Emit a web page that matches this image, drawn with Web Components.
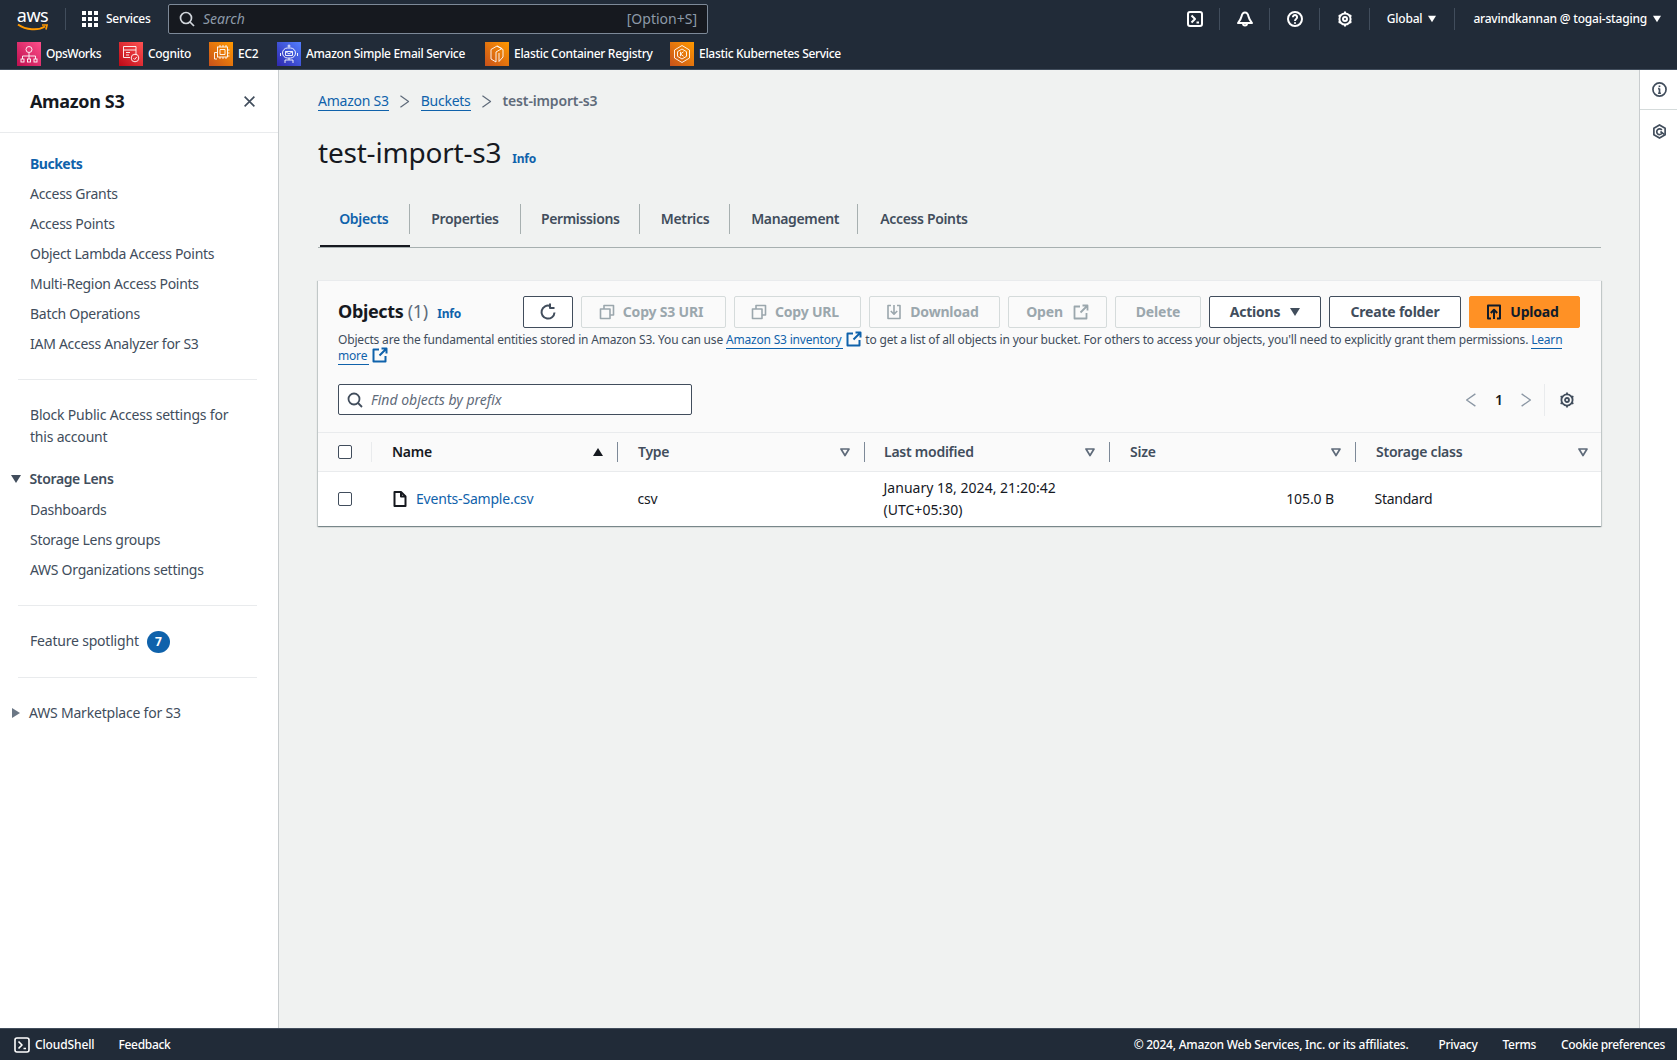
<!DOCTYPE html>
<html lang="en"><head><meta charset="utf-8"><title>test-import-s3</title>
<style>
html,body{margin:0;height:100%;background:#f0f2f1;}
body{font-family:"Noto Sans","Open Sans",sans-serif;font-size:14px;line-height:20px;color:#16191f;overflow:hidden;letter-spacing:-.25px}
aws-page{height:1060px}
</style></head><body>
<aws-page>
  <aws-topbar slot="top"></aws-topbar>
  <aws-sidenav slot="nav"></aws-sidenav>
  <aws-main slot="main"></aws-main>
  <aws-rail slot="rail"></aws-rail>
  <aws-footer slot="foot"></aws-footer>
</aws-page>
<script>
const P = {
 terminal:'<rect x="1" y="1" width="14" height="14" rx="2"/><path d="M4.500 4.500 8 8l-3.500 3.500M9.500 11.500H12"/>',
 bell:'<path d="M8 1.500C6 1.500 5 3 4.500 5.500 4 8 2.500 10 1 12h14c-1.500-2-3-4-3.500-6.500C11 3 10 1.500 8 1.500Z"/><path d="M6 12.500a2 2 0 0 0 4 0"/>',
 help:'<circle cx="8" cy="8" r="7"/><path d="M5.900 6.200a2.100 2.100 0 1 1 3.400 1.600C8.500 8.400 8 8.800 8 10M8 11.300v1.400"/>',
 gear:'<circle cx="8" cy="8" r="5.600"/><circle cx="8" cy="8" r="2"/><path d="M8 .6v2.200M8 13.200v2.200M1.600 4.300l1.900 1.100M12.500 10.600l1.900 1.100M1.600 11.700l1.900-1.100M12.500 5.400l1.900-1.100"/>',
 info:'<circle cx="8" cy="8" r="7"/><path d="M8 7v5M6.500 12h3M6.500 7H8M8 3.600v1.600"/>',
 hex:'<path d="M8 1 14 4.500v7L8 15 2 11.500v-7Z"/><path d="M10.500 6.500A3 3 0 1 0 10.500 10M9 8l4 3"/>',
 close:'<path d="M2 2l12 12M14 2 2 14"/>',
 search:'<circle cx="7" cy="7" r="5.500"/><path d="m11 11 4 4"/>',
 refresh:'<path d="M14.500 8.500A6.500 6.500 0 1 1 10.300 2"/><path d="M10 -.5V4H14.500"/>',
 copy:'<path d="M5 5V1.500h9.500V11H11"/><rect x="1.500" y="5" width="9.500" height="9.500"/>',
 download:'<path d="M5 1.500H2v13h12v-13h-3"/><path d="M8 1v9M4.800 7 8 10.200 11.200 7"/>',
 external:'<path d="M13.500 9v5.500h-12v-12H7"/><path d="M9.500 1.500h5v5M14.500 1.500 7.500 8.500"/>',
 upload:'<path d="M5 14.500H2v-13h12v13h-3"/><path d="M8 15V6M4.800 9 8 5.800 11.200 9"/>',
 file:'<path d="M2.500 1h6.500l4.500 4.500V15h-11Z"/><path d="M9 1v4.500h4.500"/>',
 prev:'<path d="M13 1 3 8l10 7"/>',
 next:'<path d="M3 1l10 7-10 7"/>'
};
function def(tag, css, html){
  customElements.define(tag, class extends HTMLElement{
    connectedCallback(){
      if(this.shadowRoot) return;
      this.attachShadow({mode:'open'}).innerHTML = `<style>${css}</style>${typeof html==='function'?html(this):html}`;
    }
  });
}
def('aws-icon', ':host{display:inline-flex;flex:none;line-height:0}svg{display:block;overflow:visible;fill:none;stroke:currentColor;stroke-linejoin:round}',
 el=>{const s=el.getAttribute('size')||16;const w=el.getAttribute('sw')||2;
  return `<svg width="${s}" height="${s}" viewBox="0 0 16 16" stroke-width="${w}">${P[el.getAttribute('name')]}</svg>`;});
def('aws-caret', ':host{display:inline-flex;flex:none;line-height:0}svg{display:block}',
 el=>{const w=el.getAttribute('w')||10,d=el.getAttribute('dir')||'down',c=el.getAttribute('color')||'currentColor';
  const pts={down:'0,1 10,1 5,9',up:'0,9 10,9 5,1',right:'1,0 9,5 1,10',outline:'1,2 9,2 5,8.5'}[d];
  const st=d==='outline'?`fill="none" stroke="${c}" stroke-width="1.700" stroke-linejoin="round"`:`fill="${c}"`;
  return `<svg width="${w}" height="${w}" viewBox="0 0 10 10"><polygon points="${pts}" ${st}/></svg>`;});

const SVC={
 ops:['#bd0f4f','#ff4f8b','<circle cx="12" cy="7.500" r="3"/><path d="M12 10.500V14M5.500 17v-3h13v3M12 14v3"/><rect x="4" y="17" width="3" height="3"/><rect x="10.500" y="17" width="3" height="3"/><rect x="17" y="17" width="3" height="3"/>'],
 cog:['#bd0816','#ff5252','<path d="M17 13V4.500H4.500v11H11"/><path d="M4.500 8h12.500M7 10.500h4M7 13h3"/><circle cx="16" cy="16" r="3.800"/><path d="m14.500 16.200 1.200 1.200 2-2.400"/>'],
 ec2:['#c8511b','#ff9900','<rect x="8.500" y="5" width="10" height="10"/><path d="M8 17H5.500v-6.500H8M11 7.500h5v5h-5z"/><path d="M11 3v2M14 3v2M17 3v2M20.500 8h-2M20.500 11h-2M20.500 14h-2M11 15v2M14 15v2M17 15v2"/>'],
 ses:['#2e27ad','#527fff','<rect x="5.500" y="6" width="13" height="10" rx="5"/><path d="M8.500 9.500l3.500 2.500 3.500-2.500M8.500 9.500h7v4h-7z"/><circle cx="12" cy="4" r="1"/><path d="M12 16v2M8 21v-3h8v3M3.500 11v3M20.500 11v3"/>'],
 ecr:['#c8511b','#ff9900','<path d="M12 4 6 7.500V17l5 3V10l6-3.500Z"/><path d="m12 4 6 3.500V15l-4 4.500V11"/>'],
 eks:['#c8511b','#ff9900','<path d="M12 3.500 19.500 8v8L12 20.500 4.500 16V8Z"/><path d="M12 7l4.500 2.700v4.600L12 17l-4.500-2.700V9.700Z"/><path d="M10.500 9.800v4.400M13.500 9.800 10.500 12l3 2.200"/>']
};
def('aws-fav', ':host{display:inline-flex;align-items:center;gap:5px;font-size:12px;font-weight:500;color:#fff;letter-spacing:-.3px} svg{display:block;flex:none}',
 el=>{const [a,b,c]=SVC[el.getAttribute('icon')];return `<svg width="24" height="24" viewBox="0 0 24 24"><defs><linearGradient id="g" x1="0" y1="1" x2="1" y2="0"><stop offset="0" stop-color="${a}"/><stop offset="1" stop-color="${b}"/></linearGradient></defs><rect width="24" height="24" fill="url(#g)"/><g fill="none" stroke="#fff" stroke-width=".9">${c}</g></svg><slot></slot>`;});

def('aws-page', `:host{display:grid;grid-template-columns:279px 1fr 38px;grid-template-rows:70px 958px 32px;grid-template-areas:"t t t" "n m r" "f f f";width:1677px}
 ::slotted([slot=top]){grid-area:t} ::slotted([slot=nav]){grid-area:n} ::slotted([slot=main]){grid-area:m} ::slotted([slot=rail]){grid-area:r} ::slotted([slot=foot]){grid-area:f}`,
 '<slot name="top"></slot><slot name="nav"></slot><slot name="main"></slot><slot name="rail"></slot><slot name="foot"></slot>');

def('aws-topbar', `:host{display:block;background:#212b38;border-bottom:1px solid #414d5c;color:#fff;box-sizing:border-box;height:70px;font-size:12px;letter-spacing:-.28px}
 .r1{display:flex;align-items:center;height:38px;padding:0 16px 0 16px}
 .r2{display:flex;align-items:center;height:24px;margin-top:4px;padding-left:17px}
 .logo{width:33px;height:28px;display:flex;flex-direction:column;align-items:center;margin-right:16px;flex:none}
 .logo b{font:400 18px/16px "Noto Sans",sans-serif;letter-spacing:-.5px;margin-top:2px}
 .logo svg{display:block;margin-top:0}
 .sep{width:1px;height:22px;background:#414d5c;flex:none}
 .grid{margin-left:16px;margin-right:8px;display:grid;grid-template-columns:repeat(3,4px);gap:2px;flex:none}
 .grid i{width:4px;height:4px;background:#fff;display:block}
 .svc{font-weight:500;width:62px;flex:none}
 .search{width:540px;height:30px;box-sizing:border-box;background:#16191f;border:1px solid #7d8998;border-radius:2px;display:flex;align-items:center;padding:0 10px;color:#d1d5db;font-size:14px;flex:none;letter-spacing:0}
 .search em{margin-left:8px;color:#8d99a8;flex:1}
 .search span{color:#8d99a8}
 .right{margin-left:auto;display:flex;align-items:center;height:22px;letter-spacing:-.2px}
 .ic{width:16px;display:flex}
 .right .sep{margin:0 17px 0 16px}
 .right .wide{margin:0 18px 0 18px}
 .right b{font-weight:500;display:inline-flex;align-items:center;gap:6px}`,
 `<div class="r1"><div class="logo"><b>aws</b><svg width="33" height="9" viewBox="0 0 33 9"><path d="M2 1.500C10 7 22 8 29 3.500" fill="none" stroke="#f90" stroke-width="2"/><path d="M26 2h5l-1 4.500" fill="none" stroke="#f90" stroke-width="1.700"/></svg></div>
  <span class="sep"></span><span class="grid">${'<i></i>'.repeat(9)}</span><span class="svc">Services</span>
  <div class="search"><aws-icon name="search" sw="1.700"></aws-icon><em>Search</em><span>[Option+S]</span></div>
  <div class="right"><span class="ic"><aws-icon name="terminal"></aws-icon></span><span class="sep"></span><span class="ic"><aws-icon name="bell"></aws-icon></span><span class="sep"></span><span class="ic"><aws-icon name="help"></aws-icon></span><span class="sep"></span><span class="ic"><aws-icon name="gear"></aws-icon></span><span class="sep"></span><b>Global <aws-caret w="8"></aws-caret></b><span class="sep wide"></span><b>aravindkannan @ togai-staging <aws-caret w="8"></aws-caret></b></div></div>
 <div class="r2">
  <aws-fav icon="ops" style="width:102px;letter-spacing:-.45px">OpsWorks</aws-fav>
  <aws-fav icon="cog" style="width:90px">Cognito</aws-fav>
  <aws-fav icon="ec2" style="width:68px">EC2</aws-fav>
  <aws-fav icon="ses" style="width:208px">Amazon Simple Email Service</aws-fav>
  <aws-fav icon="ecr" style="width:185px">Elastic Container Registry</aws-fav>
  <aws-fav icon="eks">Elastic Kubernetes Service</aws-fav>
 </div>`);

def('aws-sidenav', `:host{display:block;background:#fff;border-right:1px solid #c9cdcf;box-sizing:border-box;height:958px;color:#414d5c;letter-spacing:-.28px}
 header{border-bottom:1px solid #e9ebed;box-sizing:border-box;height:63px;display:flex;align-items:center;justify-content:space-between;padding:0 22px 0 30px}
 h2{margin:0;font-size:18px;font-weight:700;line-height:24px;color:#16191f;letter-spacing:-.35px}
 ul{list-style:none;margin:0;padding:0}
 li{height:30px;line-height:30px;padding-left:30px;white-space:nowrap}
 .first{padding-top:16px;padding-bottom:20px}
 hr{border:0;border-top:1px solid #e9ebed;margin:0 21px 0 18px}
 .block{padding:24px 30px 16px;line-height:22px;letter-spacing:-.2px}
 .group{height:31px;box-sizing:border-box;padding-bottom:2px;display:flex;align-items:center;font-weight:600;padding-left:11px;gap:8.500px;letter-spacing:-.36px}
 .spot{height:30px;display:flex;align-items:center;padding-left:30px;gap:8px;margin:20px 0 21px;letter-spacing:-.2px}
 .badge{width:23px;height:22px;border-radius:50%;background:#0f62ab;color:#fff;font-size:12px;font-weight:700;display:flex;align-items:center;justify-content:center;margin-top:1px}
 .mk{height:30px;display:flex;align-items:center;padding-left:11px;gap:8px;margin-top:20px;letter-spacing:-.2px}
 .act{color:#0f62ab;font-weight:700;letter-spacing:-.5px}
 .pad{padding-bottom:20px}`,
 `<header><h2>Amazon S3</h2><aws-icon name="close" size="13" sw="2"></aws-icon></header>
  <ul class="first"><li class="act">Buckets</li><li>Access Grants</li><li>Access Points</li><li>Object Lambda Access Points</li><li>Multi-Region Access Points</li><li>Batch Operations</li><li>IAM Access Analyzer for S3</li></ul>
  <hr><div class="block">Block Public Access settings for this account</div>
  <div class="group"><aws-caret w="10" dir="down"></aws-caret><span>Storage Lens</span></div>
  <ul class="pad"><li>Dashboards</li><li>Storage Lens groups</li><li>AWS Organizations settings</li></ul>
  <hr><div class="spot"><span>Feature spotlight</span><span class="badge">7</span></div>
  <hr><div class="mk"><aws-caret w="10" dir="right" color="#6b7785"></aws-caret><span>AWS Marketplace for S3</span></div>`);

def('aws-crumbs', `:host{display:flex;align-items:center;height:20px;color:#5f6b7a}
 a{color:#0f62ab;text-decoration:none;border-bottom:1px solid #0f62ab;line-height:18px}
 aws-icon{margin:0 9.500px;color:#5f6b7a} b{font-weight:600;color:#5f6b7a;letter-spacing:-.15px}`,
 `<a>Amazon S3</a><aws-icon name="next" size="13" sw="1.500"></aws-icon><a>Buckets</a><aws-icon name="next" size="13" sw="1.500"></aws-icon><b>test-import-s3</b>`);

def('aws-tabs', `:host{display:block;border-bottom:1px solid #a7b0b0;height:44px;box-sizing:border-box;padding-left:2px;letter-spacing:-.35px}
 nav{display:flex;height:43px}
 span{box-sizing:border-box;height:43px;position:relative;font-weight:600;color:#414d5c;display:flex;justify-content:center;padding-top:5px;line-height:20px}
 span::after{content:"";position:absolute;right:0;top:0;height:30px;width:1px;background:#a7b0b0}
 span:last-child::after{display:none}
 .on{color:#0f62ab;border-bottom:2px solid #16191f}`,
 `<nav><span class="on" style="width:89.500px;padding-right:2px">Objects</span><span style="width:111px">Properties</span><span style="width:119.500px">Permissions</span><span style="width:90px">Metrics</span><span style="width:128.400px;padding-left:2px">Management</span><span style="width:129px;padding-left:2px">Access Points</span></nav>`);

def('aws-btn', `:host{display:inline-flex;box-sizing:border-box;height:32px;align-items:center;justify-content:center;gap:8px;border:1px solid #414d5c;border-radius:2px;color:#414d5c;font-weight:700;background:#fff;flex:none;white-space:nowrap;letter-spacing:-.2px}
 :host([kind=off]){border-color:#d5dbdb;color:#9ba7ad;background:#fafafa}
 :host([kind=primary]){border-color:#ff9125;background:#ff9125;color:#0f1b2a}`,
 `<slot></slot>`);

def('obj-table', `:host{display:block;--cols:54px 245px 247px 245px 246px 246px}
 .row{display:grid;grid-template-columns:var(--cols)}
 .head{height:38px;border-top:1px solid #e9ebed;border-bottom:1px solid #e9ebed;background:#fafafa;font-weight:700;color:#414d5c}
 .cell{display:flex;align-items:center;padding-left:20px;box-sizing:border-box;min-width:0}
 .cell b{font-weight:600;flex:1}
 .chk{width:14px;height:14px;box-sizing:border-box;border:1px solid #414d5c;border-radius:2px;background:#fff;flex:none}
 .head .cell{position:relative;padding-right:14px}
 .head .cell::after{content:"";position:absolute;right:-1px;top:9px;height:20px;width:1px;background:#7d8998}
 .head .cell:first-child::after{background:#e9ebed;right:0}
 .head .cell:last-child::after{display:none}
 .head .cell:last-child{padding-right:13px}
 .head .cell:nth-child(3),.head .cell:nth-child(5),.head .cell:nth-child(6){padding-left:21px}
 .head .cell:nth-child(2) b{color:#16191f}
 .body{height:54px;background:#fff;color:#16191f}
 .body .cell{padding-left:20.500px}
 .body .cell:first-child{padding-left:20px}
 .body .file{padding-left:20px;gap:8px;letter-spacing:-.19px}
 .date{line-height:22px;padding-left:19.500px!important;letter-spacing:.02px}
 a{color:#0f62ab}
 .size{justify-content:flex-end;padding-right:21px;letter-spacing:-.1px}
 .std{padding-left:19.500px!important}`,
 `<div class="row head">
   <div class="cell"><span class="chk"></span></div>
   <div class="cell"><b>Name</b><aws-caret w="10" dir="up" color="#16191f"></aws-caret></div>
   <div class="cell"><b>Type</b><aws-caret w="10" dir="outline" color="#5f6b7a"></aws-caret></div>
   <div class="cell"><b>Last modified</b><aws-caret w="10" dir="outline" color="#5f6b7a"></aws-caret></div>
   <div class="cell"><b>Size</b><aws-caret w="10" dir="outline" color="#5f6b7a"></aws-caret></div>
   <div class="cell"><b>Storage class</b><aws-caret w="10" dir="outline" color="#5f6b7a"></aws-caret></div>
  </div>
  <div class="row body">
   <div class="cell"><span class="chk"></span></div>
   <div class="cell file"><aws-icon name="file" size="16" sw="2"></aws-icon><a>Events-Sample.csv</a></div>
   <div class="cell">csv</div>
   <div class="cell date">January 18, 2024, 21:20:42<br>(UTC+05:30)</div>
   <div class="cell size">105.0 B</div>
   <div class="cell std">Standard</div>
  </div>`);

def('aws-card', `:host{display:block;background:#fafafa;box-shadow:0 1px 1px 0 rgba(0,28,36,.3),1px 1px 1px 0 rgba(0,28,36,.15),-1px 1px 1px 0 rgba(0,28,36,.15);border-top:1px solid #e9ebed;overflow:hidden}
 .top{padding:15px 21px 16px 20px}
 .bar{display:flex;align-items:center;gap:8px;height:32px}
 .ttl{margin-right:auto;display:flex;align-items:baseline;margin-bottom:1px}
 h2{margin:0;font-size:18px;font-weight:700;line-height:24px;letter-spacing:-.35px}
 h2 span{font-weight:400;color:#5f6b7a}
 .info{font-size:12px;font-weight:700;color:#0f62ab;margin-left:9.500px}
 p{margin:4px 0 0;font-size:12px;line-height:16px;color:#414d5c;white-space:nowrap;letter-spacing:-.185px}
 p a{color:#0f62ab;border-bottom:1px solid #0f62ab;padding-right:2px}
 p aws-icon{color:#0f62ab;vertical-align:-3px;margin-block:-3px}
 .filter{display:flex;align-items:center;margin-top:20px;height:32px}
 .inp{width:354px;height:31px;box-sizing:border-box;border:1px solid #414d5c;border-radius:2px;background:#fff;display:flex;align-items:center;padding-left:8px;gap:8px;color:#5f6b7a;font-style:italic;letter-spacing:0;margin-bottom:1px}
 .pg{margin-left:auto;display:flex;align-items:center;height:32px}
 .pg b{font-weight:600;margin:0 16.500px 0 17px;width:7px;font-size:14px;text-align:center}
 .pg .sp{width:1px;height:32px;background:#e9ebed;margin:0 14px 0 11.500px}
 .pg aws-icon.mut{color:#8a96a3}
 .pg aws-icon.g{margin-right:5px;color:#414d5c}`,
 `<div class="top"><div class="bar">
   <div class="ttl"><h2>Objects <span>(1)</span></h2><span class="info">Info</span></div>
   <aws-btn style="width:50px"><aws-icon name="refresh"></aws-icon></aws-btn>
   <aws-btn kind="off" style="width:145px;padding-right:5px"><aws-icon name="copy" sw="1.600"></aws-icon>Copy S3 URI</aws-btn>
   <aws-btn kind="off" style="width:127px;padding-right:5px"><aws-icon name="copy" sw="1.600"></aws-icon>Copy URL</aws-btn>
   <aws-btn kind="off" style="width:131px;padding-right:4px"><aws-icon name="download" sw="1.600"></aws-icon>Download</aws-btn>
   <aws-btn kind="off" style="width:99px;gap:10px">Open<aws-icon name="external" sw="1.800"></aws-icon></aws-btn>
   <aws-btn kind="off" style="width:86px">Delete</aws-btn>
   <aws-btn style="width:112px;gap:10px">Actions<aws-caret w="10"></aws-caret></aws-btn>
   <aws-btn style="width:132px">Create folder</aws-btn>
   <aws-btn kind="primary" style="width:111px;padding-right:4px"><aws-icon name="upload"></aws-icon>Upload</aws-btn>
  </div>
  <p>Objects are the fundamental entities stored in Amazon S3. You can use <a>Amazon S3 inventory</a> <aws-icon name="external" size="16" sw="2"></aws-icon> to get a list of all objects in your bucket. For others to access your objects, you'll need to explicitly grant them permissions. <a style="padding:0">Learn</a><br><a>more</a> <aws-icon name="external" size="16" sw="2"></aws-icon></p>
  <div class="filter"><div class="inp"><aws-icon name="search" sw="1.800" style="color:#414d5c"></aws-icon>Find objects by prefix</div>
   <div class="pg"><aws-icon class="mut" name="prev" size="14" sw="1.500"></aws-icon><b>1</b><aws-icon class="mut" name="next" size="14" sw="1.500"></aws-icon><span class="sp"></span><aws-icon class="g" name="gear" sw="1.800"></aws-icon></div></div>
  </div><obj-table></obj-table>`);

def('aws-main', `:host{display:block;background:#f0f2f1;padding:21px 38px 0 39px;box-sizing:border-box;height:958px;min-width:0}
 .h{display:flex;align-items:baseline;margin-top:23px;height:36px;margin-bottom:34px}
 h1{margin:0;font-size:28px;font-weight:400;line-height:36px;color:#16191f;letter-spacing:-.2px}
 .info{font-size:12px;font-weight:700;color:#0f62ab;margin-left:11px}
 aws-card{margin-top:32px}`,
 `<aws-crumbs></aws-crumbs><div class="h"><h1>test-import-s3</h1><span class="info">Info</span></div><aws-tabs></aws-tabs><aws-card></aws-card>`);

def('aws-rail', `:host{display:flex;flex-direction:column;background:#fff;border-left:1px solid #c9cdcf;box-sizing:border-box;height:958px;color:#414d5c}
 div{height:40px;box-sizing:border-box;display:flex;align-items:center;justify-content:center;padding-left:1px}
 .a{border-bottom:1px solid #d5dbdb}`,
 `<div class="a"><aws-icon name="info" size="15" sw="1.800"></aws-icon></div><div style="height:41px;padding-top:1px"><aws-icon name="hex" size="15" sw="1.800"></aws-icon></div>`);

def('aws-footer', `:host{display:flex;align-items:center;height:32px;box-sizing:border-box;background:#212b38;color:#fff;font-size:12px;font-weight:500;border-top:1px solid #414d5c;padding:0 12px 0 14px;letter-spacing:-.12px}
 span{flex:none} aws-icon{margin-right:5px} .fb{margin-left:24px;letter-spacing:-.3px} .r{margin-left:auto;display:flex;gap:25px;letter-spacing:-.3px} .r span:first-child{margin-right:5px;letter-spacing:-.24px} .r span:last-child{letter-spacing:-.36px}`,
 `<aws-icon name="terminal" sw="1.600"></aws-icon><span>CloudShell</span><span class="fb">Feedback</span><div class="r"><span>© 2024, Amazon Web Services, Inc. or its affiliates.</span><span>Privacy</span><span>Terms</span><span>Cookie preferences</span></div>`);
</script>
</body></html>
